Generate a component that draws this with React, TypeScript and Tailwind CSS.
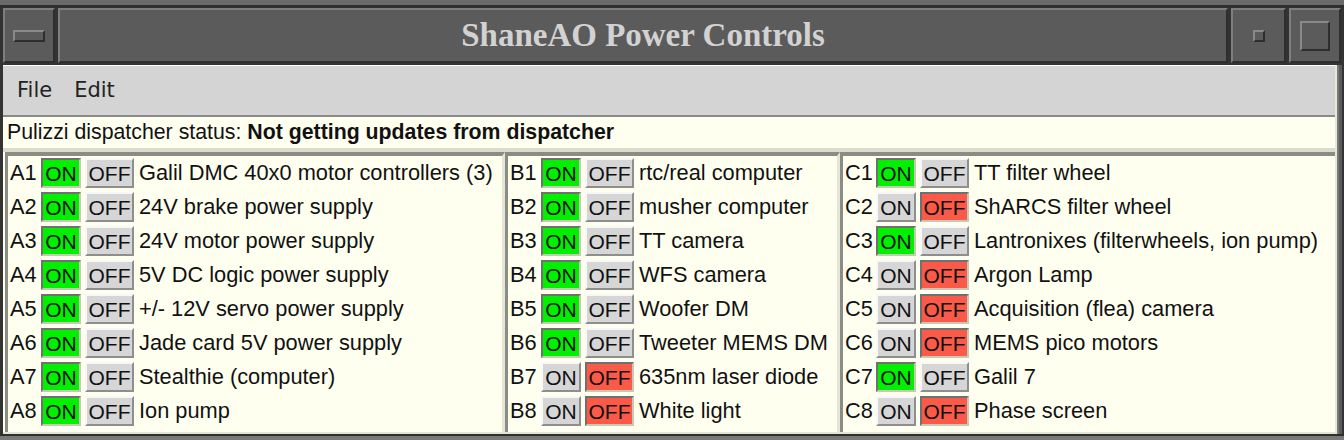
import type { ReactNode } from "react";

type Row = { id: string; on: boolean; label: string };

const colA: Row[] = [
  { id: "A1", on: true, label: "Galil DMC 40x0 motor controllers (3)" },
  { id: "A2", on: true, label: "24V brake power supply" },
  { id: "A3", on: true, label: "24V motor power supply" },
  { id: "A4", on: true, label: "5V DC logic power supply" },
  { id: "A5", on: true, label: "+/- 12V servo power supply" },
  { id: "A6", on: true, label: "Jade card 5V power supply" },
  { id: "A7", on: true, label: "Stealthie (computer)" },
  { id: "A8", on: true, label: "Ion pump" },
];

const colB: Row[] = [
  { id: "B1", on: true, label: "rtc/real computer" },
  { id: "B2", on: true, label: "musher computer" },
  { id: "B3", on: true, label: "TT camera" },
  { id: "B4", on: true, label: "WFS camera" },
  { id: "B5", on: true, label: "Woofer DM" },
  { id: "B6", on: true, label: "Tweeter MEMS DM" },
  { id: "B7", on: false, label: "635nm laser diode" },
  { id: "B8", on: false, label: "White light" },
];

const colC: Row[] = [
  { id: "C1", on: true, label: "TT filter wheel" },
  { id: "C2", on: false, label: "ShARCS filter wheel" },
  { id: "C3", on: true, label: "Lantronixes (filterwheels, ion pump)" },
  { id: "C4", on: false, label: "Argon Lamp" },
  { id: "C5", on: false, label: "Acquisition (flea) camera" },
  { id: "C6", on: false, label: "MEMS pico motors" },
  { id: "C7", on: true, label: "Galil 7" },
  { id: "C8", on: false, label: "Phase screen" },
];

function TkButton({ active, color, wide, children }: { active: boolean; color: "green" | "red"; wide?: boolean; children: ReactNode }) {
  const base = `flex h-[30px] items-center justify-center border-2 text-[21px] leading-none ${wide ? "w-[49px]" : "w-[40px]"}`;
  if (active) {
    const bg = color === "green" ? "bg-[#00f000]" : "bg-[#fc5a48]";
    return (
      <div className={`${base} ${bg} border-t-[#707070] border-l-[#707070] border-b-[#c8c8b8] border-r-[#c8c8b8]`}>
        {children}
      </div>
    );
  }
  return (
    <div className={`${base} bg-[#d6d6d6] border-t-[#f8f8f8] border-l-[#f8f8f8] border-b-[#8e8e8e] border-r-[#8e8e8e]`}>
      {children}
    </div>
  );
}

function Column({ rows, className }: { rows: Row[]; className: string }) {
  return (
    <div className={`flex flex-col gap-[4px] border-t-[4px] border-l-[3px] border-t-[#8c8c86] border-l-[#8c8c86] pt-[2px] ${className}`}>
      {rows.map((r) => (
        <div key={r.id} className="flex h-[30px] items-center">
          <span className="w-[33px] pl-[2px]">{r.id}</span>
          <TkButton active={r.on} color="green">ON</TkButton>
          <span className="w-[4px]" />
          <TkButton active={!r.on} color="red" wide>OFF</TkButton>
          <span className="ml-[5px] whitespace-nowrap">{r.label}</span>
        </div>
      ))}
    </div>
  );
}

function FrameButton({ children, className = "" }: { children?: ReactNode; className?: string }) {
  return (
    <div className={`flex items-center justify-center border-2 border-t-[#7e7e7e] border-l-[#7e7e7e] border-b-[#2e2e2e] border-r-[#2e2e2e] bg-[#5b5b5b] ${className}`}>
      {children}
    </div>
  );
}

export default function App() {
  return (
    <div className="flex h-[440px] w-[1344px] flex-col overflow-hidden bg-[#333333] font-['Liberation_Sans',Arial,sans-serif] text-[21.8px] text-[#111]">
      {/* outer frame top */}
      <div className="h-[8px] shrink-0 border-b-[3px] border-[#2e2e2e] bg-[#6a6a6a]" />

      {/* title bar */}
      <div className="flex h-[57px] shrink-0 gap-[3px] px-[3px] pb-[2px]">
        <FrameButton className="w-[52px]">
          <div className="h-[12px] w-[32px] border-2 border-t-[#8a8a8a] border-l-[#8a8a8a] border-b-[#2e2e2e] border-r-[#2e2e2e]" />
        </FrameButton>
        <FrameButton className="flex-1">
          <span className="font-['Liberation_Serif',serif] text-[33px] font-bold text-[#d2d2d2]">ShaneAO Power Controls</span>
        </FrameButton>
        <FrameButton className="w-[55px]">
          <div className="h-[12px] w-[12px] border-2 border-t-[#8a8a8a] border-l-[#8a8a8a] border-b-[#2e2e2e] border-r-[#2e2e2e]" />
        </FrameButton>
        <FrameButton className="w-[52px]">
          <div className="h-[30px] w-[30px] border-2 border-t-[#8a8a8a] border-l-[#8a8a8a] border-b-[#2e2e2e] border-r-[#2e2e2e]" />
        </FrameButton>
      </div>

      <div className="flex min-h-0 flex-1 pl-[3px]">
        <div className="flex w-[1334px] flex-col border-r-[2px] border-[#e8e8d8] bg-[#fffff0]">
          {/* menubar */}
          <div className="flex h-[52px] shrink-0 items-center gap-[22px] border-t border-b-2 border-t-white border-b-[#8a8a8a] bg-[#d4d4d4] pl-[14px] font-['DejaVu_Sans',sans-serif] text-[21px] text-[#222]">
            <span>File</span>
            <span>Edit</span>
          </div>
          {/* status */}
          <div className="flex h-[31px] shrink-0 items-center pl-[4px] text-[21.3px]">
            Pulizzi dispatcher status:&nbsp;<b>Not getting updates from dispatcher</b>
          </div>
          <div className="h-[4px] shrink-0 bg-[#dcdccc]" />
          {/* columns */}
          <div className="flex min-h-0 flex-1 pl-[2px]">
            <Column rows={colA} className="w-[500px] border-r-[3px] border-r-[#e6e6d6]" />
            <Column rows={colB} className="w-[335px] border-r-[3px] border-r-[#e6e6d6]" />
            <Column rows={colC} className="flex-1" />
          </div>
          <div className="h-[2px] shrink-0 bg-[#e6e6d6]" />
        </div>
        <div className="w-[5px] border-l-2 border-[#7a7a7a] bg-[#5b5b5b]" />
      </div>
      <div className="h-[6px] shrink-0 border-t-[2px] border-[#2e2e2e] bg-[#7a7a7a]" />
    </div>
  );
}
